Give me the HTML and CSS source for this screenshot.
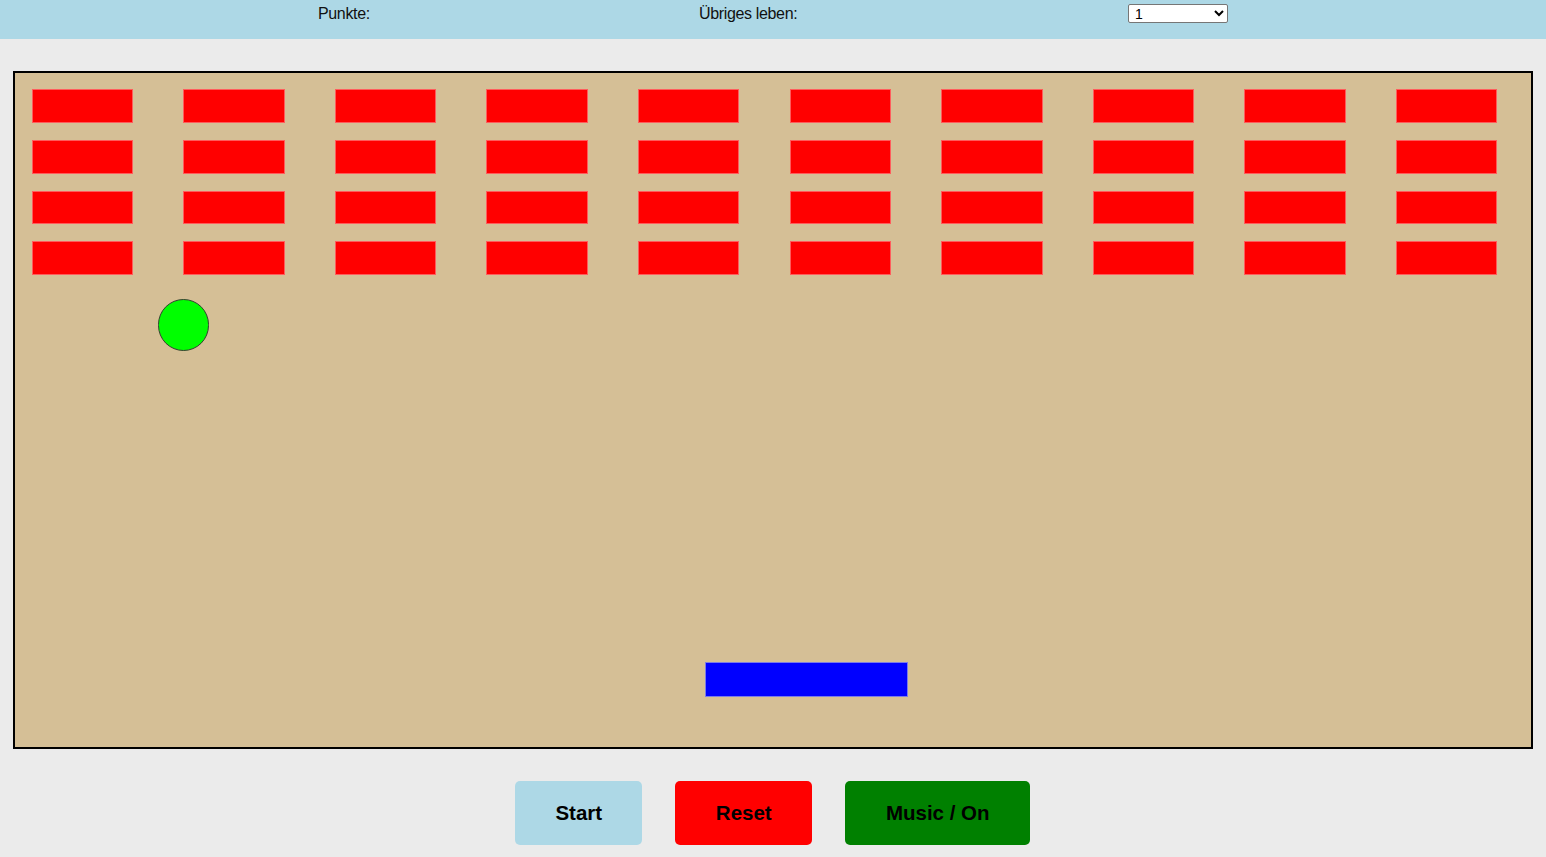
FILE: index.html
```html
<!DOCTYPE html>
<html lang="de">
<head>
<meta charset="utf-8">
<title>Breakout</title>
<link rel="stylesheet" href="styles.css">
</head>
<body>
<header class="topbar">
  <div class="stat stat-score">Punkte: <span class="value"></span></div>
  <div class="stat stat-lives">Übriges leben: <span class="value"></span></div>
  <select class="level">
    <option>1</option>
    <option>2</option>
    <option>3</option>
  </select>
</header>
<main class="stage">
  <div class="board">
    <div class="bricks">
      <div class="brick"></div><div class="brick"></div><div class="brick"></div><div class="brick"></div><div class="brick"></div>
      <div class="brick"></div><div class="brick"></div><div class="brick"></div><div class="brick"></div><div class="brick"></div>
      <div class="brick"></div><div class="brick"></div><div class="brick"></div><div class="brick"></div><div class="brick"></div>
      <div class="brick"></div><div class="brick"></div><div class="brick"></div><div class="brick"></div><div class="brick"></div>
      <div class="brick"></div><div class="brick"></div><div class="brick"></div><div class="brick"></div><div class="brick"></div>
      <div class="brick"></div><div class="brick"></div><div class="brick"></div><div class="brick"></div><div class="brick"></div>
      <div class="brick"></div><div class="brick"></div><div class="brick"></div><div class="brick"></div><div class="brick"></div>
      <div class="brick"></div><div class="brick"></div><div class="brick"></div><div class="brick"></div><div class="brick"></div>
    </div>
    <div class="ball"></div>
    <div class="paddle"></div>
  </div>
</main>
<footer class="controls">
  <button class="btn btn-start">Start</button>
  <button class="btn btn-reset">Reset</button>
  <button class="btn btn-music">Music / On</button>
</footer>
</body>
</html>
```
FILE: styles.css
```css
html, body {
  margin: 0;
  padding: 0;
}
body {
  background: #ebebeb;
  font-family: "Liberation Sans", Arial, sans-serif;
  width: 1546px;
  height: 857px;
  overflow: hidden;
}
.topbar {
  height: 39px;
  background: #add8e6;
  display: flex;
  justify-content: space-evenly;
  align-items: flex-start;
  box-sizing: border-box;
}
.stat {
  font-size: 16px;
  letter-spacing: -0.35px;
  color: #111;
  line-height: 18px;
  padding-top: 5px;
  white-space: nowrap;
}
.stat-score { width: 63px; }
.stat-lives { width: 111px; }
.level {
  width: 100px;
  height: 19px;
  margin-top: 4px;
  font-family: "Liberation Sans", Arial, sans-serif;
  font-size: 14px;
  border: 1px solid #767676;
  border-radius: 2px;
  background: #fff;
  color: #000;
  padding: 0 2px;
}
.stage {
  padding: 32px 13px 0;
}
.board {
  position: relative;
  width: 1520px;
  height: 677.5px;
  box-sizing: border-box;
  border: 2px solid #000;
  background: #d5bf96;
}
.bricks {
  display: grid;
  grid-template-columns: repeat(10, 101.3px);
  grid-auto-rows: 33.8px;
  column-gap: 50.3px;
  row-gap: 16.8px;
  padding: 16.4px 0 0 16.7px;
}
.brick {
  background: #ff0000;
  box-sizing: border-box;
  border: 1px solid #ff5c5c;
}
.ball {
  position: absolute;
  left: 142.7px;
  top: 226.4px;
  width: 51.6px;
  height: 51.6px;
  box-sizing: border-box;
  border-radius: 50%;
  background: #00ff00;
  border: 1.5px solid #33402f;
}
.paddle {
  position: absolute;
  left: 690.3px;
  top: 589.4px;
  width: 202.7px;
  height: 34.3px;
  box-sizing: border-box;
  background: #0000ff;
  border: 1px solid #7b7be8;
}
.controls {
  display: flex;
  justify-content: center;
  gap: 33px;
  padding-top: 32.5px;
  padding-right: 0.5px;
}
.btn {
  height: 64px;
  border: none;
  border-radius: 5px;
  font-family: "Liberation Sans", Arial, sans-serif;
  font-size: 20.5px;
  font-weight: bold;
  color: #000;
  padding: 0;
  cursor: pointer;
}
.btn-start { width: 127px; background: #add8e6; }
.btn-reset { width: 137px; background: #ff0000; }
.btn-music { width: 185px; background: #008000; }
```
